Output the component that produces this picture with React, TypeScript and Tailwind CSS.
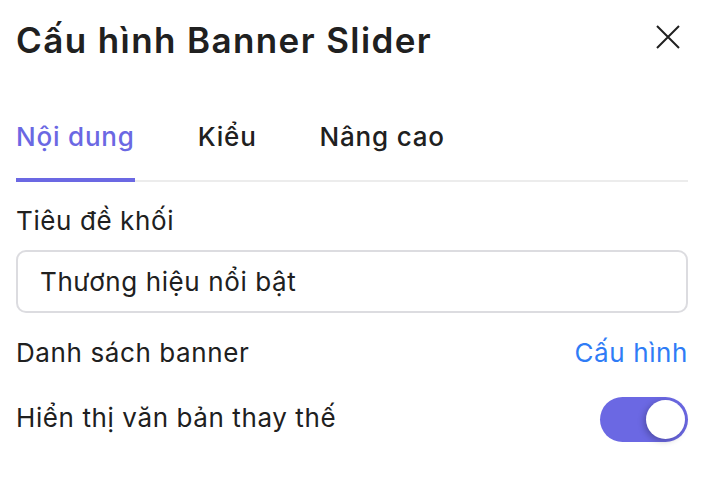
import { useState } from "react";

const tabs = ["Nội dung", "Kiểu", "Nâng cao"];

export default function App() {
  const [active, setActive] = useState(0);
  const [altText, setAltText] = useState(true);

  return (
    <div className="w-[706px] h-[488px] bg-white text-[#202020] font-['Inter','Noto_Sans',sans-serif] pl-4 pr-[18px]">
      {/* Header */}
      <header className="flex items-start justify-between pt-[18px]">
        <h1 className="text-[35px] font-semibold leading-[44px] tracking-[1.4px]">Cấu hình Banner Slider</h1>
        <button className="mt-[7px] mr-[8px] text-[#202020]" aria-label="Đóng">
          <svg width="24" height="24" viewBox="0 0 24 24" fill="none" stroke="currentColor" strokeWidth="2">
            <path d="M1 1L23 23M23 1L1 23" />
          </svg>
        </button>
      </header>

      {/* Tabs */}
      <nav className="mt-[56px] flex gap-[63px] border-b-2 border-[#ececec]">
        {tabs.map((t, i) => (
          <button
            key={t}
            onClick={() => setActive(i)}
            className={
              "relative pb-[24px] text-[26px] font-medium leading-[38px] tracking-[0.8px] " +
              (i === active ? "text-[#6b68e3]" : "text-[#202020]")
            }
          >
            {t}
            {i === active && <span className="absolute left-0 right-0 -bottom-[2px] h-1 bg-[#6b68e3]" />}
          </button>
        ))}
      </nav>

      {/* Body */}
      <section className="mt-[23px] text-[26px] leading-[32px] tracking-[0.6px]">
        <label className="block">Tiêu đề khối</label>
        <input
          className="mt-[13px] w-full h-[63px] rounded-[10px] border-2 border-[#dcdce0] px-[22px] tracking-[0.6px] outline-none"
          defaultValue="Thương hiệu nổi bật"
        />

        <div className="mt-[24px] flex items-center justify-between">
          <span>Danh sách banner</span>
          <button className="text-[#2f7cf6] tracking-[0.6px]">Cấu hình</button>
        </div>

        <div className="mt-[28px] flex items-start justify-between">
          <span className="mt-[5px]">Hiển thị văn bản thay thế</span>
          <button
            onClick={() => setAltText(!altText)}
            className={
              "w-[88px] h-[45px] rounded-full p-[3px] flex " +
              (altText ? "bg-[#6b68e3] justify-end" : "bg-[#d4d4d8] justify-start")
            }
          >
            <span className="w-[39px] h-[39px] rounded-full bg-white shadow-[-2px_2px_6px_rgba(0,0,0,0.25)]" />
          </button>
        </div>
      </section>
    </div>
  );
}
